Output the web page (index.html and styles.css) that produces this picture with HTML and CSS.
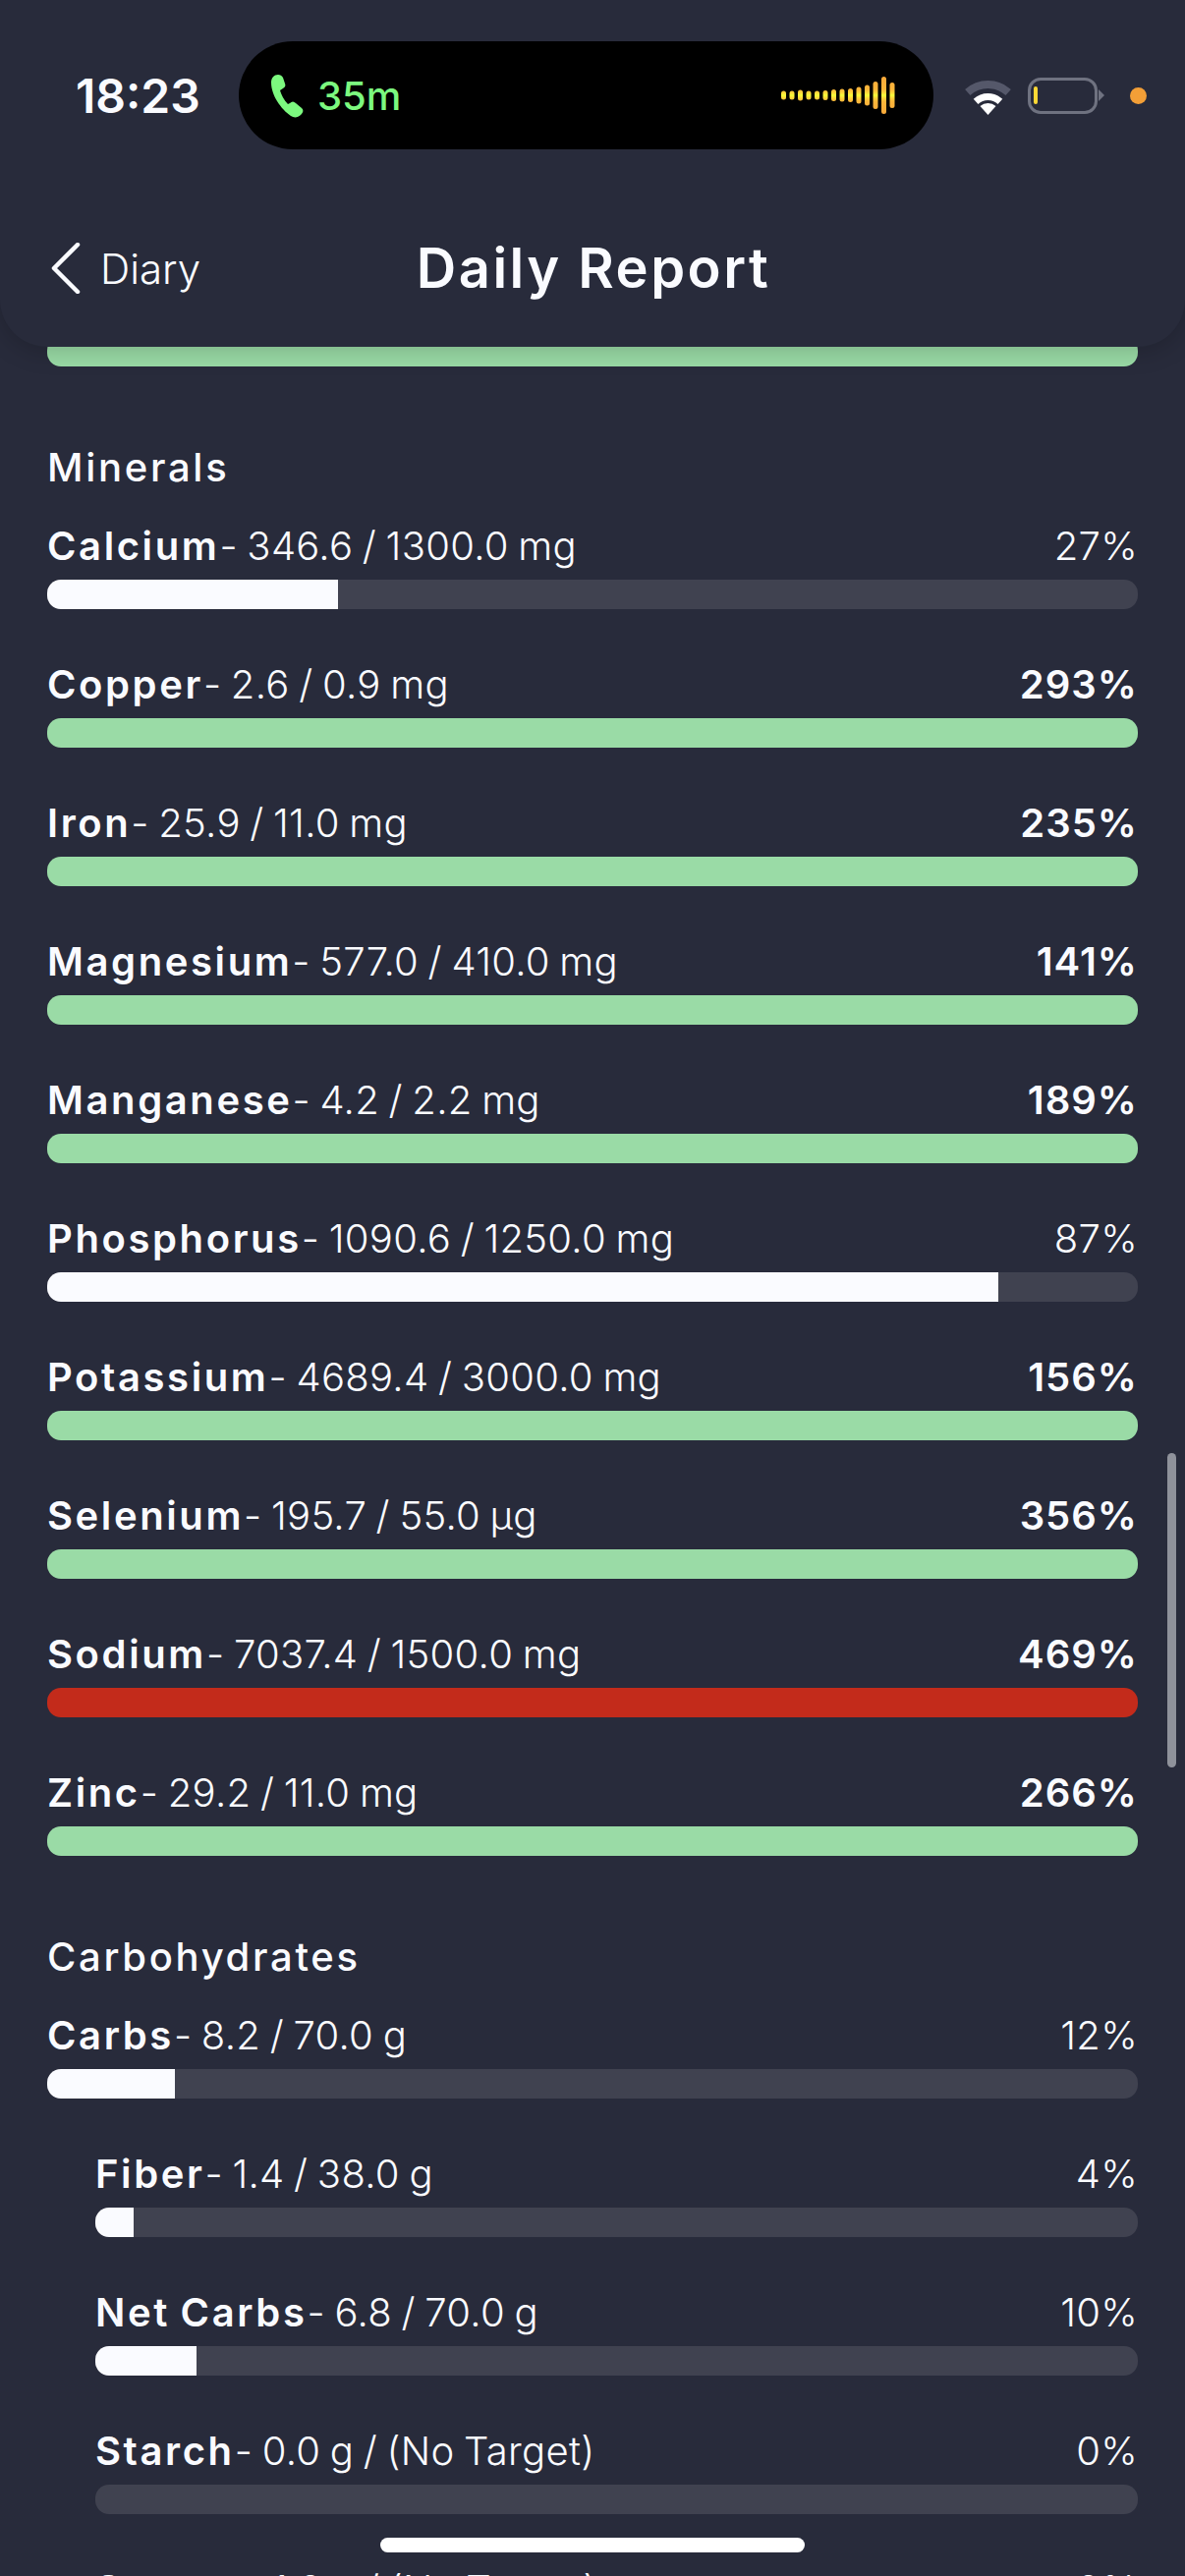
FILE: index.html
```html
<!DOCTYPE html>
<html lang="en">
  <head>
    <meta charset="UTF-8" />
    <meta name="viewport" content="width=device-width, initial-scale=1.0" />
    <title>Daily Report</title>
    <link rel="stylesheet" href="styles.css">
  </head>
  <body>
    <div class="screen">
      <header class="top">
        <div class="status">
          <span class="time">18:23</span>
          <div class="island">
            <svg class="phone" width="33" height="45" viewBox="0 0 33 45">
              <path d="M7 1C3 1 0 4 0 9C0 22 10 36 20 43C23 45 27 45 30 42C33 39 33 37 31 35L25 30C23 28 21 28 19 30L17 31C13 27 10 21 9 17L12 15C14 14 15 12 14 10L12 4C11 2 9 1 7 1Z" />
            </svg>
            <span class="call">35m</span>
            <svg class="wave" width="117" height="38" viewBox="0 0 117 38">
              <defs>
                <linearGradient id="waveFill" gradientUnits="userSpaceOnUse" x1="0" y1="0" x2="0" y2="38">
                  <stop offset="0" stop-color="#f9a93a" />
                  <stop offset="0.34" stop-color="#fcb63a" />
                  <stop offset="0.45" stop-color="#ffe03a" />
                  <stop offset="0.5" stop-color="#f4ff3a" />
                  <stop offset="0.55" stop-color="#ffe03a" />
                  <stop offset="0.66" stop-color="#fcb63a" />
                  <stop offset="1" stop-color="#f9a93a" />
                </linearGradient>
              </defs>
              <g fill="url(#waveFill)">
                <rect x="0" y="14.5" width="5" height="9" rx="2.5" />
                <rect x="8.5" y="14.5" width="5" height="9" rx="2.5" />
                <rect x="17" y="13.5" width="5" height="11" rx="2.5" />
                <rect x="25.5" y="14.5" width="5" height="9" rx="2.5" />
                <rect x="34" y="14.5" width="5" height="9" rx="2.5" />
                <rect x="42.5" y="14" width="5" height="10" rx="2.5" />
                <rect x="51" y="13" width="5" height="12" rx="2.5" />
                <rect x="59.5" y="12.5" width="5" height="13" rx="2.5" />
                <rect x="68" y="12" width="5" height="14" rx="2.5" />
                <rect x="76.5" y="10.5" width="5" height="17" rx="2.5" />
                <rect x="85" y="8.5" width="5" height="21" rx="2.5" />
                <rect x="93.5" y="5" width="5" height="28" rx="2.5" />
                <rect x="102" y="0" width="5" height="38" rx="2.5" />
                <rect x="110.5" y="6" width="5" height="26" rx="2.5" />
              </g>
            </svg>
          </div>
          <svg class="wifi" width="47" height="35" viewBox="0 0 47 35">
            <path class="wifi-dim" d="M2.8 12A31 31 0 0 1 44.2 12" />
            <path class="wifi-on" d="M11.1 21.3A18.5 18.5 0 0 1 35.9 21.3" />
            <path class="wifi-tip" d="M23.5 35L15.5 26.1A12 12 0 0 1 31.5 26.1Z" />
          </svg>
          <div class="battery"><span class="battery-level"></span></div>
          <span class="battery-nub"></span>
          <span class="mic-dot"></span>
        </div>
        <nav class="nav">
          <a class="back" href="#">
            <svg width="30" height="52" viewBox="0 0 30 52">
              <path d="M27 2L3 26L27 50" />
            </svg>
            <span>Diary</span>
          </a>
          <h1>Daily Report</h1>
        </nav>
      </header>

      <main class="content">
        <div class="row">
          <div class="bar"><div class="fill good" style="width: 100%"></div></div>
        </div>

        <section class="group">
          <h2>Minerals</h2>
          <div class="row">
            <div class="label"><span><b>Calcium</b>- 346.6 / 1300.0 mg</span><span>27%</span></div>
            <div class="bar"><div class="fill" style="width: 26.66%"></div></div>
          </div>
          <div class="row">
            <div class="label"><span><b>Copper</b>- 2.6 / 0.9 mg</span><b class="pct">293%</b></div>
            <div class="bar"><div class="fill good" style="width: 100%"></div></div>
          </div>
          <div class="row">
            <div class="label"><span><b>Iron</b>- 25.9 / 11.0 mg</span><b class="pct">235%</b></div>
            <div class="bar"><div class="fill good" style="width: 100%"></div></div>
          </div>
          <div class="row">
            <div class="label"><span><b>Magnesium</b>- 577.0 / 410.0 mg</span><b class="pct">141%</b></div>
            <div class="bar"><div class="fill good" style="width: 100%"></div></div>
          </div>
          <div class="row">
            <div class="label"><span><b>Manganese</b>- 4.2 / 2.2 mg</span><b class="pct">189%</b></div>
            <div class="bar"><div class="fill good" style="width: 100%"></div></div>
          </div>
          <div class="row">
            <div class="label"><span><b>Phosphorus</b>- 1090.6 / 1250.0 mg</span><span>87%</span></div>
            <div class="bar"><div class="fill" style="width: 87.25%"></div></div>
          </div>
          <div class="row">
            <div class="label"><span><b>Potassium</b>- 4689.4 / 3000.0 mg</span><b class="pct">156%</b></div>
            <div class="bar"><div class="fill good" style="width: 100%"></div></div>
          </div>
          <div class="row">
            <div class="label"><span><b>Selenium</b>- 195.7 / 55.0 µg</span><b class="pct">356%</b></div>
            <div class="bar"><div class="fill good" style="width: 100%"></div></div>
          </div>
          <div class="row">
            <div class="label"><span><b>Sodium</b>- 7037.4 / 1500.0 mg</span><b class="pct">469%</b></div>
            <div class="bar"><div class="fill over" style="width: 100%"></div></div>
          </div>
          <div class="row">
            <div class="label"><span><b>Zinc</b>- 29.2 / 11.0 mg</span><b class="pct">266%</b></div>
            <div class="bar"><div class="fill good" style="width: 100%"></div></div>
          </div>
        </section>

        <section class="group">
          <h2>Carbohydrates</h2>
          <div class="row">
            <div class="label"><span><b>Carbs</b>- 8.2 / 70.0 g</span><span>12%</span></div>
            <div class="bar"><div class="fill" style="width: 11.7%"></div></div>
          </div>
          <div class="row sub">
            <div class="label"><span><b>Fiber</b>- 1.4 / 38.0 g</span><span>4%</span></div>
            <div class="bar"><div class="fill" style="width: 3.7%"></div></div>
          </div>
          <div class="row sub">
            <div class="label"><span><b>Net Carbs</b>- 6.8 / 70.0 g</span><span>10%</span></div>
            <div class="bar"><div class="fill" style="width: 9.7%"></div></div>
          </div>
          <div class="row sub">
            <div class="label"><span><b>Starch</b>- 0.0 g / (No Target)</span><span>0%</span></div>
            <div class="bar"></div>
          </div>
          <div class="row sub">
            <div class="label"><span><b>Sugars</b>- 1.0 g / (No Target)</span><span>0%</span></div>
            <div class="bar"></div>
          </div>
        </section>
      </main>

      <div class="scrollbar"></div>
      <div class="home-bar"></div>
    </div>
  </body>
</html>
```

FILE: styles.css
```css
* {
  margin: 0;
  padding: 0;
  box-sizing: border-box;
}

body {
  background: #282b3b;
  color: #fafbff;
  font-family: "Inter", "Liberation Sans", sans-serif;
}

.screen {
  position: relative;
  height: 2622px;
  overflow: hidden;
}

/* Header */
.top {
  position: relative;
  z-index: 1;
  height: 353px;
  background: #282b3b;
  border-radius: 0 0 48px 48px;
  box-shadow: 0 4px 26px rgba(0, 0, 0, 0.2);
  padding-top: 42px;
}

.status {
  display: flex;
  align-items: center;
  height: 110px;
  padding-left: 77px;
}

.time {
  width: 166px;
  font-size: 48px;
  font-weight: 600;
}

.island {
  display: flex;
  align-items: center;
  width: 707px;
  height: 110px;
  padding: 0 38px 0 33px;
  background: #000;
  border-radius: 55px;
}

.phone {
  fill: #7cf97f;
  margin-right: 14px;
}

.call {
  font-size: 40px;
  font-weight: 500;
  color: #7cf97f;
}

.wave {
  margin-left: auto;
}

.wifi {
  margin-left: 32px;
  margin-top: 5px;
}

.wifi-dim,
.wifi-on {
  fill: none;
}

.wifi-dim {
  stroke: #55586a;
  stroke-width: 8;
}

.wifi-on {
  stroke: #fff;
  stroke-width: 7;
}

.wifi-tip {
  fill: #fff;
}

.battery {
  width: 71px;
  height: 37px;
  margin-left: 17px;
  padding: 6px 0 0 3px;
  border: 3px solid #6f7280;
  border-radius: 13px;
}

.battery-level {
  display: block;
  width: 4px;
  height: 18px;
  background: #fdd835;
  border-radius: 2px;
}

.battery-nub {
  width: 0;
  height: 0;
  border-left: 6px solid #6f7280;
  border-top: 6px solid transparent;
  border-bottom: 6px solid transparent;
  margin-left: 1px;
}

.mic-dot {
  width: 17px;
  height: 17px;
  margin-left: 26px;
  background: #f39f37;
  border-radius: 50%;
}

.nav {
  position: relative;
  display: flex;
  align-items: center;
  justify-content: center;
  height: 80px;
  margin-top: 81px;
  padding-left: 2px;
}

.back {
  position: absolute;
  left: 52px;
  top: 14px;
  display: flex;
  align-items: center;
  gap: 20px;
  color: #fafbff;
  text-decoration: none;
  font-size: 42px;
  font-weight: 300;
}

.back svg {
  fill: none;
  stroke: #fafbff;
  stroke-width: 4.5;
  stroke-linecap: round;
  stroke-linejoin: round;
}

.nav h1 {
  font-size: 56px;
  font-weight: 600;
  letter-spacing: 2.5px;
}

/* Report rows */
.content {
  margin-top: -10px;
  padding: 0 48px;
}

.group {
  padding-top: 25px;
}

.group h2 {
  height: 46px;
  margin-bottom: 35px;
  font-size: 40px;
  line-height: 46px;
  font-weight: 500;
  letter-spacing: 2.7px;
}

.row {
  margin-bottom: 55px;
}

.row.sub {
  margin-left: 49px;
}

.label {
  display: flex;
  justify-content: space-between;
  height: 46px;
  margin-bottom: 10px;
  font-size: 40px;
  line-height: 44px;
  font-weight: 300;
  letter-spacing: 0.3px;
  word-spacing: -2px;
}

.label b {
  font-weight: 600;
  letter-spacing: 2.6px;
}

.label .pct {
  letter-spacing: 1px;
}

.bar {
  height: 30px;
  background: #404250;
  border-radius: 14px;
  overflow: hidden;
}

.fill {
  height: 100%;
  background: #fafbff;
}

.fill.good {
  background: #9adba6;
}

.fill.over {
  background: #c32b1b;
}

/* Overlays */
.scrollbar {
  position: absolute;
  z-index: 2;
  top: 1479px;
  left: 1188px;
  width: 9px;
  height: 320px;
  background: #8f929b;
  border-radius: 5px;
}

.home-bar {
  position: absolute;
  z-index: 2;
  top: 2583px;
  left: 387px;
  width: 432px;
  height: 15px;
  background: #fff;
  border-radius: 8px;
}
```
